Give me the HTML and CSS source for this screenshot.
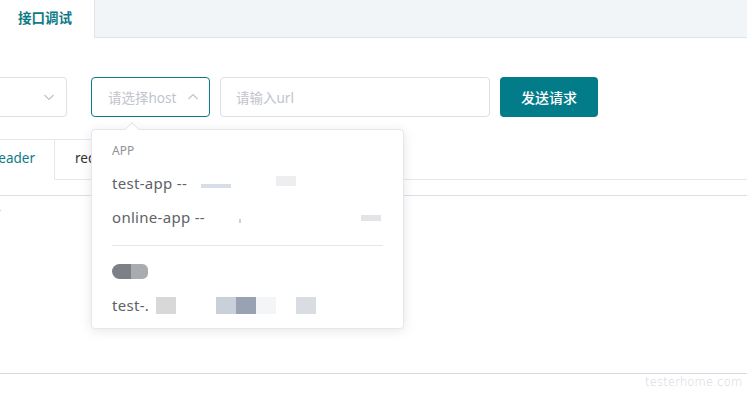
FILE: index.html
```html
<!DOCTYPE html>
<html lang="zh">
<head>
<meta charset="utf-8">
<link rel="stylesheet" href="styles.css">
</head>
<body>
<div class="page">
  <div class="topbar">
    <div class="toptab">接口调试</div>
    <div class="topfill"></div>
  </div>

  <div class="reqrow">
    <div class="field method"><span class="ph"></span>
      <svg class="chev" width="12" height="12" viewBox="0 0 12 12"><path d="M1.5 4 L6 8.5 L10.5 4" fill="none" stroke="#c0c4cc" stroke-width="1.2"/></svg>
    </div>
    <div class="field host is-focus"><span class="ph">请选择host</span>
      <svg class="chev" width="12" height="12" viewBox="0 0 12 12"><path d="M1.5 8 L6 3.5 L10.5 8" fill="none" stroke="#c0c4cc" stroke-width="1.2"/></svg>
    </div>
    <div class="field url"><span class="ph">请输入url</span></div>
    <button class="send">发送请求</button>
  </div>

  <div class="subtabs">
    <div class="subtab active">header</div>
    <div class="subtab">request body</div>
    <div class="subfill"></div>
  </div>
  <div class="editor"><span class="ph">请输入header</span></div>

  <div class="footer-line"></div>
  <div class="watermark">testerhome.com</div>

  <div class="dropdown">
    <div class="arrow"></div>
    <div class="group-title">APP</div>
    <div class="opt">test-app -- <span class="blur b1"></span><span class="blur b2"></span></div>
    <div class="opt">online-app -- <span class="blur b3"></span><span class="blur b4"></span></div>
    <div class="divider"></div>
    <div class="group-title"><span class="blob"><span class="blob-l"></span><span class="blob-r"></span></span></div>
    <div class="opt last">test-. <span class="blk k1"></span><span class="blk k2"></span><span class="blk k3"></span><span class="blk k4"></span><span class="blk k5"></span></div>
  </div>
</div>
</body>
</html>
```
FILE: styles.css
```css
* { box-sizing: border-box; }
html, body { margin: 0; padding: 0; background: #fff; }
body {
  font-family: "Noto Sans", "Noto Sans CJK SC", sans-serif;
  color: #606266;
  overflow: hidden;
  width: 747px;
  height: 397px;
}
.page { position: relative; width: 747px; height: 397px; overflow: hidden; }

.topbar { display: flex; height: 38px; }
.toptab {
  width: 94px;
  height: 38px;
  line-height: 36px;
  padding-left: 18px;
  font-size: 13.5px;
  font-weight: 700;
  color: #0e7a87;
  background: #fff;
}
.topfill {
  flex: 1;
  background: #f2f5f8;
  border-left: 1px solid #e0e3e9;
  border-bottom: 1px solid #e0e3e9;
}

.reqrow {
  display: flex;
  align-items: center;
  margin-top: 39px;
  margin-left: -30px;
  height: 40px;
}
.field {
  height: 40px;
  border: 1px solid #dcdfe6;
  border-radius: 4px;
  display: flex;
  align-items: center;
  padding: 0 15px;
  font-size: 13.5px;
}
.ph { color: #c0c4cc; }
.method { width: 97px; justify-content: flex-end; padding-right: 11px; }
.host { width: 119px; margin-left: 24px; padding-left: 16px; justify-content: space-between; padding-right: 10px; }
.host.is-focus { border-color: #0e7a87; }
.url { width: 270px; margin-left: 10px; padding-left: 15px; }
.send {
  margin-left: 10px;
  width: 98px;
  height: 40px;
  border: none;
  border-radius: 4px;
  background: #037c8a;
  color: #fff;
  font-family: inherit;
  font-size: 14px;
  font-weight: 500;
}

.subtabs {
  display: flex;
  margin-top: 22px;
  margin-left: -30px;
  height: 41px;
}
.subtab {
  height: 41px;
  padding: 0 20px;
  line-height: 37px;
  font-size: 13.5px;
  color: #303133;
  border-top: 1px solid #e4e7ed;
  border-right: 1px solid #e4e7ed;
  border-bottom: 1px solid #e4e7ed;
}
.subtab.active { color: #0e7a87; border-bottom-color: transparent; width: 85px; }
.subfill { flex: 1; border-bottom: 1px solid #e4e7ed; }

.editor {
  margin-top: 15px;
  margin-left: -75px;
  border-top: 1px solid #dcdfe6;
  padding: 7px 0 0 0;
  font-size: 12px;
  height: 180px;
}

.footer-line {
  position: absolute;
  left: 0; right: 0;
  top: 373px;
  border-top: 1px solid #d9d6e0;
}
.watermark {
  position: absolute;
  left: 645px;
  top: 375px;
  font-family: "DejaVu Sans", sans-serif;
  font-size: 11.5px;
  font-weight: 200;
  letter-spacing: 0.2px;
  color: #d3d3d9;
  white-space: nowrap;
}

.dropdown {
  position: absolute;
  left: 91px;
  top: 129px;
  width: 313px;
  height: 200px;
  background: #fff;
  border: 1px solid #e4e7ed;
  border-radius: 4px;
  box-shadow: 0 2px 12px rgba(0,0,0,0.1);
  padding: 6px 20px 0 20px;
}
.arrow {
  position: absolute;
  top: -6px;
  left: 35px;
  width: 10px; height: 10px;
  background: #fff;
  border-left: 1px solid #e4e7ed;
  border-top: 1px solid #e4e7ed;
  transform: rotate(45deg);
}
.group-title {
  height: 30px;
  line-height: 30px;
  font-size: 12px;
  color: #909399;
  display: flex;
  align-items: center;
}
.opt {
  height: 34px;
  line-height: 34px;
  font-size: 15px;
  letter-spacing: 0.3px;
  color: #606266;
  display: flex;
  align-items: center;
  white-space: pre;
}
.opt.last { margin-top: 2px; }
.divider { border-top: 1px solid #e4e7ed; margin: 11px 0 10px; }
.blur { display: inline-block; flex: none; }
.b1 { width: 30px; height: 4px; background: #c8d0de; margin-left: 10px; margin-top: 6px; opacity: .7; }
.b2 { width: 20px; height: 10px; background: #eeeef0; margin-left: 45px; margin-top: -4px; }
.b3 { width: 2px; height: 4px; background: #c8d0de; margin-left: 30px; margin-top: 8px; }
.b4 { width: 20px; height: 6px; background: #e2e4e8; margin-left: 120px; margin-top: 2px; }
.blob { display: inline-flex; height: 15px; border-radius: 8px 6px 6px 8px; overflow: hidden; }
.blob-l { width: 19px; background: #7d8087; }
.blob-r { width: 17px; background: #a9abb0; }
.blk { display: inline-block; height: 17px; flex: none; }
.k1 { width: 20px; background: #d8d8d8; margin-left: 3px; }
.k2 { width: 20px; background: #c9d0da; margin-left: 40px; }
.k3 { width: 20px; background: #98a2b2; }
.k4 { width: 20px; background: #f4f5f7; }
.k5 { width: 20px; background: #d9dde2; margin-left: 20px; }
```
